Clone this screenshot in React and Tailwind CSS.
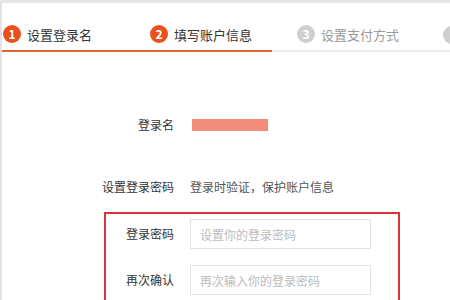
const font = { fontFamily: '"Noto Sans CJK SC", "Liberation Sans", sans-serif' };

function Step({ n, label, active, width }) {
  return (
    <div className={`flex items-center gap-[6px] ${width}`}>
      <span
        className={`flex h-[18px] w-[18px] shrink-0 items-center justify-center rounded-full text-[12px] font-bold text-white ${
          active ? "bg-[#e9501c]" : "bg-[#cfcfcf]"
        }`}
      >
        {n}
      </span>
      {label && (
        <span className={`text-[13px] ${active ? "text-[#333]" : "text-[#999]"}`}>{label}</span>
      )}
    </div>
  );
}

export default function App() {
  return (
    <div className="h-[300px] w-[450px] overflow-hidden bg-white" style={font}>
      <div className="h-[3px] bg-[#e6e6e6]" />
      <div className="flex h-[297px] border-l-2 border-[#e3e3e3]">
        <div className="flex-1">
          {/* 步骤 */}
          <div className="flex h-[47px] items-end pb-[6px] pl-[1px]">
            <Step n="1" label="设置登录名" active width="w-[147px]" />
            <Step n="2" label="填写账户信息" active width="w-[147px]" />
            <Step n="3" label="设置支付方式" width="w-[146px]" />
            <Step n="" label="" width="w-[20px]" />
          </div>
          <div className="flex h-[2px]">
            <div className="w-[270px] bg-[#e0662f]" />
            <div className="flex-1 bg-[#ececec]" />
          </div>

          {/* 登录名 */}
          <div className="mt-[64px] flex items-center">
            <div className="w-[172px] text-right text-[12px] text-[#333]">登录名</div>
            <div className="ml-[18px] h-[12px] w-[76px] bg-[#f28d7b]" />
          </div>

          {/* 设置登录密码 */}
          <div className="mt-[44px] flex items-center">
            <div className="w-[172px] text-right text-[12px] text-[#333]">设置登录密码</div>
            <div className="ml-[16px] text-[12px] text-[#555]">登录时验证，保护账户信息</div>
          </div>

          {/* 密码框 */}
          <div className="ml-[102px] mt-[16px] w-[296px] border-2 border-[#d9363b] pt-[5px] pb-[10px]">
            <div className="flex items-center">
              <div className="w-[68px] text-right text-[12px] text-[#333]">登录密码</div>
              <input
                className="ml-[16px] h-[30px] w-[181px] border border-[#e2e2e2] px-[9px] text-[12px] outline-none placeholder:text-[#bbb]"
                placeholder="设置你的登录密码"
                style={font}
              />
            </div>
            <div className="mt-[16px] flex items-center">
              <div className="w-[68px] text-right text-[12px] text-[#333]">再次确认</div>
              <input
                className="ml-[16px] h-[30px] w-[181px] border border-[#e2e2e2] px-[9px] text-[12px] outline-none placeholder:text-[#bbb]"
                placeholder="再次输入你的登录密码"
                style={font}
              />
            </div>
          </div>
        </div>
      </div>
    </div>
  );
}
